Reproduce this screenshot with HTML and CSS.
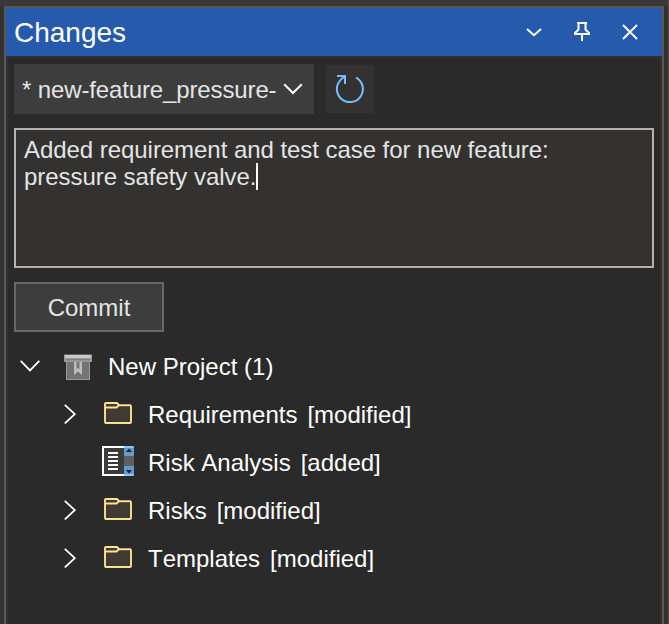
FILE: index.html
```html
<!DOCTYPE html>
<html lang="en">
<head>
<meta charset="utf-8">
<title>Changes</title>
<link rel="stylesheet" href="styles.css">
</head>
<body>
<svg class="symbols" aria-hidden="true">
  <symbol id="folder" viewBox="0 0 32 32">
    <path d="M3 7V25.1H29V8H17L15 5H3Z" fill="#3e3b34"/>
    <path d="M3 9.5V5.8Q3 5 3.8 5H15L17 7.2H28Q29 7.2 29 8.2V24Q29 25 28 25H4Q3 25 3 24V9.5H14.5L17 7.2" fill="none" stroke="#ffdf91" stroke-width="1.9"/>
  </symbol>
  <symbol id="expand" viewBox="0 0 12 20"><path d="M.8 .8L10.8 10.2L.8 19.4" fill="none" stroke="#fff" stroke-width="1.8"/></symbol>
</svg>
<main class="panel">
  <header class="titlebar">
    <h1>Changes</h1>
    <div class="window-actions">
      <svg width="24" height="24" viewBox="0 0 24 24"><path d="M5 9L12 15.2L19 9" class="line"/></svg>
      <svg width="24" height="24" viewBox="0 0 24 24"><path d="M7 3H17M8.5 3V9.5L5 13V14H19V13L15.5 9.5V3M12 14V21" class="line"/></svg>
      <svg width="24" height="24" viewBox="0 0 24 24"><path d="M5 5L19 19M19 5L5 19" class="line"/></svg>
    </div>
  </header>
  <section class="content">
    <div class="toolbar">
      <div class="branch"><span>* new-feature_pressure-</span>
        <svg width="20" height="12" viewBox="0 0 20 12"><path d="M1.2 1.2L10 10L18.8 1.2" class="line"/></svg>
      </div>
      <div class="refresh">
        <svg width="32" height="32" viewBox="0 0 32 32"><path d="M22 4.6A13 13 0 1 1 4.8 9.3Q6.5 6.5 10.5 3.5M3 3H11V11" fill="none" stroke="#75bfff" stroke-width="2"/></svg>
      </div>
    </div>
    <div class="message">Added requirement and test case for new feature:<br>pressure safety valve.<span class="caret"></span></div>
    <button class="commit">Commit</button>
    <ul class="tree">
      <li class="root">
        <svg class="root-arrow" width="20" height="12" viewBox="0 0 20 12"><path d="M.7 .9L10 10.5L19.3 .9" class="line thin"/></svg>
        <svg class="project-icon" width="28" height="26" viewBox="0 0 28 26">
          <path d="M2 6H26V26H2Z" fill="#999"/><path d="M3 8H25V25H3Z" fill="#737373"/>
          <path d="M0 .5H28V8H0Z" fill="#999"/><path d="M1 1H27V4H1Z" fill="#c9c9c9"/><path d="M2 5H26V6.2H2Z" fill="#808080"/>
          <path d="M10 8H18V21L14 17.5L10 21Z" fill="#bdbdbd"/><path d="M12.5 8H15.5V15L14 14L12.5 15Z" fill="#777"/>
        </svg>
        <span>New Project (1)</span>
      </li>
      <li><svg class="arrow"><use href="#expand"/></svg><svg class="icon"><use href="#folder"/></svg><span>Requirements</span><span class="state">[modified]</span></li>
      <li><span class="arrow"></span>
        <svg class="icon list-icon" viewBox="0 0 32 32">
          <path d="M1 2H31V30H1Z" fill="#3b3b3b"/><path d="M23 2H1V30H23" fill="none" stroke="#fff" stroke-width="2"/>
          <path d="M6 8H16M6 12H16M6 16H16M6 20H16M6 24H16" stroke="#fff" stroke-width="2"/>
          <path d="M22 11H32V21H22Z" fill="#5f5f5f"/><path d="M22 1H31L32 2V11H22ZM22 21H32V30L31 31H22Z" fill="#649bcd"/>
          <path d="M22 1H31L32 2V3H22ZM22 29H32V30L31 31H22Z" fill="#8bc7ff"/>
          <path d="M24 7L27 3.5L30 7ZM24 25H30L27 28.5Z" fill="#17222d"/>
        </svg><span>Risk Analysis</span><span class="state">[added]</span></li>
      <li><svg class="arrow"><use href="#expand"/></svg><svg class="icon"><use href="#folder"/></svg><span>Risks</span><span class="state">[modified]</span></li>
      <li><svg class="arrow"><use href="#expand"/></svg><svg class="icon"><use href="#folder"/></svg><span>Templates</span><span class="state">[modified]</span></li>
    </ul>
  </section>
</main>
</body>
</html>
```
FILE: styles.css
```css
* { box-sizing: border-box; }
body {
  margin: 0;
  height: 624px;
  overflow: hidden;
  padding: 6px 4px 0;
  background: #333230;
  border-right: 1px solid #51504f;
  box-shadow: inset 0 6px #3a3938;
  font: 24px/27px "Liberation Sans", Arial, sans-serif;
  color: #fff;
}
svg { display: block; flex: none; }
.symbols { position: absolute; width: 0; height: 0; }
.line { fill: none; stroke: #fff; stroke-width: 2; }
.thin { stroke-width: 1.8; }
.panel {
  width: 660px;
  height: 618px;
  border: 2px solid #5a5857;
  border-bottom: 0;
  background: #2a2a2a;
}
.titlebar {
  display: flex;
  align-items: center;
  justify-content: space-between;
  height: 48px;
  padding: 0 20px 0 8px;
  background: #255aac;
}
h1 { margin: 0; padding-top: 1px; font-size: 28px; line-height: 32px; font-weight: 400; }
.window-actions { display: flex; gap: 24px; }
.content {
  height: 568px;
  padding: 6px;
  border: 2px solid #333231;
  border-bottom: 0;
}
.toolbar { display: flex; align-items: center; gap: 12px; }
.branch {
  display: flex;
  align-items: center;
  justify-content: space-between;
  width: 300px;
  height: 50px;
  padding: 0 11px 0 8px;
  background: #3d3d3d;
  color: #e4e4e4;
  letter-spacing: -.13px;
  white-space: nowrap;
}
.refresh { width: 48px; height: 48px; padding: 8px; background: #333230; }
.message {
  width: 640px;
  height: 140px;
  margin-top: 14px;
  padding: 6px 8px;
  border: 2px solid #b3b2b1;
  background: #333230;
  color: #e4e4e4;
  letter-spacing: -.05px;
}
.caret {
  display: inline-block;
  width: 2px;
  height: 27px;
  margin: -5px 0;
  vertical-align: 0;
  background: #fff;
}
.commit {
  display: block;
  width: 150px;
  height: 50px;
  margin-top: 14px;
  padding: 0;
  border: 2px solid #686868;
  background: #3d3d3d;
  color: #e4e4e4;
  font: inherit;
}
.tree { list-style: none; margin: 10px 0 0; padding: 0; font-kerning: none; }
.tree li { display: flex; align-items: center; height: 48px; padding-left: 50px; }
.tree .root { padding-left: 6px; }
.project-icon { margin: 2px 16px 0 24px; }
.arrow { width: 12px; height: 20px; margin-right: 26px; }
.icon { width: 32px; height: 32px; margin-right: 14px; }
.list-icon { margin-bottom: 2px; }
.state { margin-left: 10px; }
```
